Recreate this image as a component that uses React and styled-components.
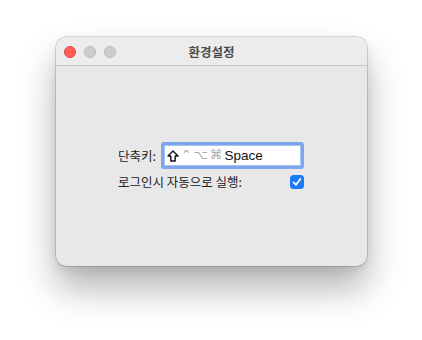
import styled, { createGlobalStyle } from 'styled-components';

const GlobalStyle = createGlobalStyle`
  html, body {
    margin: 0;
    padding: 0;
    background: #ffffff;
  }
  body {
    font-family: "Liberation Sans", "Noto Sans CJK KR", sans-serif;
    -webkit-font-smoothing: antialiased;
  }
`;

const Page = styled.div`
  width: 422px;
  height: 340px;
  padding: 37px 0 0 56px;
  box-sizing: border-box;
  overflow: hidden;
`;

const Window = styled.div`
  width: 311px;
  height: 229px;
  border-radius: 10px;
  background: #e8e8e8;
  box-shadow: 0 0 0 0.5px rgba(0, 0, 0, 0.28), 0 22px 36px rgba(0, 0, 0, 0.3),
    0 4px 10px rgba(0, 0, 0, 0.08);
  display: flex;
  flex-direction: column;
  overflow: hidden;
`;

const TitleBar = styled.div`
  position: relative;
  height: 28px;
  flex-shrink: 0;
  background: #ececec;
  border-bottom: 1px solid #c9c9c9;
  display: flex;
  align-items: center;
  justify-content: center;
`;

const Lights = styled.div`
  position: absolute;
  left: 8px;
  top: 9px;
  display: flex;
  gap: 8px;
`;

const Light = styled.span`
  width: 12px;
  height: 12px;
  border-radius: 50%;
  box-sizing: border-box;
  background: ${(p) => p.$color};
  border: 0.5px solid ${(p) => p.$edge};
`;

const Title = styled.div`
  font-family: "Noto Sans CJK KR", sans-serif;
  font-size: 12.5px;
  font-weight: 700;
  color: #4b4b4b;
  margin-top: 1px;
`;

const Body = styled.div`
  flex: 1;
  display: flex;
  justify-content: center;
  padding-top: 76px;
  padding-right: 1px;
`;

const Form = styled.div`
  width: 186px;
  display: flex;
  flex-direction: column;
  gap: 3px;
`;

const Row = styled.div`
  display: flex;
  align-items: center;
  justify-content: ${(p) => (p.$spread ? 'space-between' : 'flex-start')};
  gap: 8px;
`;

const Label = styled.span`
  font-family: "Noto Sans CJK KR", sans-serif;
  font-size: 12.5px;
  color: #222;
  white-space: nowrap;
`;

const Field = styled.div`
  flex: 1;
  height: 21px;
  box-sizing: border-box;
  background: #fff;
  border: 1px solid #a9c3f0;
  border-radius: 1px;
  box-shadow: 0 0 0 3px #7ea6ee;
  display: flex;
  align-items: center;
  padding-left: 2px;
  margin: 3px 3px 3px 0;
  font-size: 13px;
  color: #111;
`;

const Mod = styled.span`
  color: #a8a8a8;
  font-family: "DejaVu Sans", sans-serif;
  font-size: 12.5px;
  margin-right: 2px;
  line-height: 1;
`;

const ShiftIcon = styled.svg`
  width: 12px;
  height: 12px;
  margin-right: 2px;
`;

const KeyName = styled.span`
  font-family: "Liberation Sans", sans-serif;
  font-size: 13.5px;
  color: #111;
`;

const Check = styled.span`
  width: 14px;
  height: 14px;
  border-radius: 3.5px;
  background: #1a7cf5;
  display: flex;
  align-items: center;
  justify-content: center;
`;

export default function App() {
  return (
    <>
      <GlobalStyle />
      <Page>
        <Window>
          <TitleBar>
            <Lights>
              <Light $color="#fe5f57" $edge="#e1463f" />
              <Light $color="#cdcdcd" $edge="#b9b9b9" />
              <Light $color="#cdcdcd" $edge="#b9b9b9" />
            </Lights>
            <Title>환경설정</Title>
          </TitleBar>
          <Body>
            <Form>
              <Row>
                <Label>단축키:</Label>
                <Field>
                  <ShiftIcon viewBox="0 0 12 12">
                    <path
                      d="M6 1 L11 6 L8.2 6 L8.2 11 L3.8 11 L3.8 6 L1 6 Z"
                      fill="none"
                      stroke="#111"
                      strokeWidth="1.4"
                      strokeLinejoin="round"
                    />
                  </ShiftIcon>
                  <Mod>⌃</Mod>
                  <Mod>⌥</Mod>
                  <Mod>⌘</Mod>
                  <KeyName>Space</KeyName>
                </Field>
              </Row>
              <Row $spread>
                <Label>로그인시 자동으로 실행:</Label>
                <Check>
                  <svg width="10" height="10" viewBox="0 0 10 10">
                    <path
                      d="M1.6 5.4 L4 7.8 L8.4 2"
                      fill="none"
                      stroke="#fff"
                      strokeWidth="1.8"
                      strokeLinecap="round"
                      strokeLinejoin="round"
                    />
                  </svg>
                </Check>
              </Row>
            </Form>
          </Body>
        </Window>
      </Page>
    </>
  );
}
